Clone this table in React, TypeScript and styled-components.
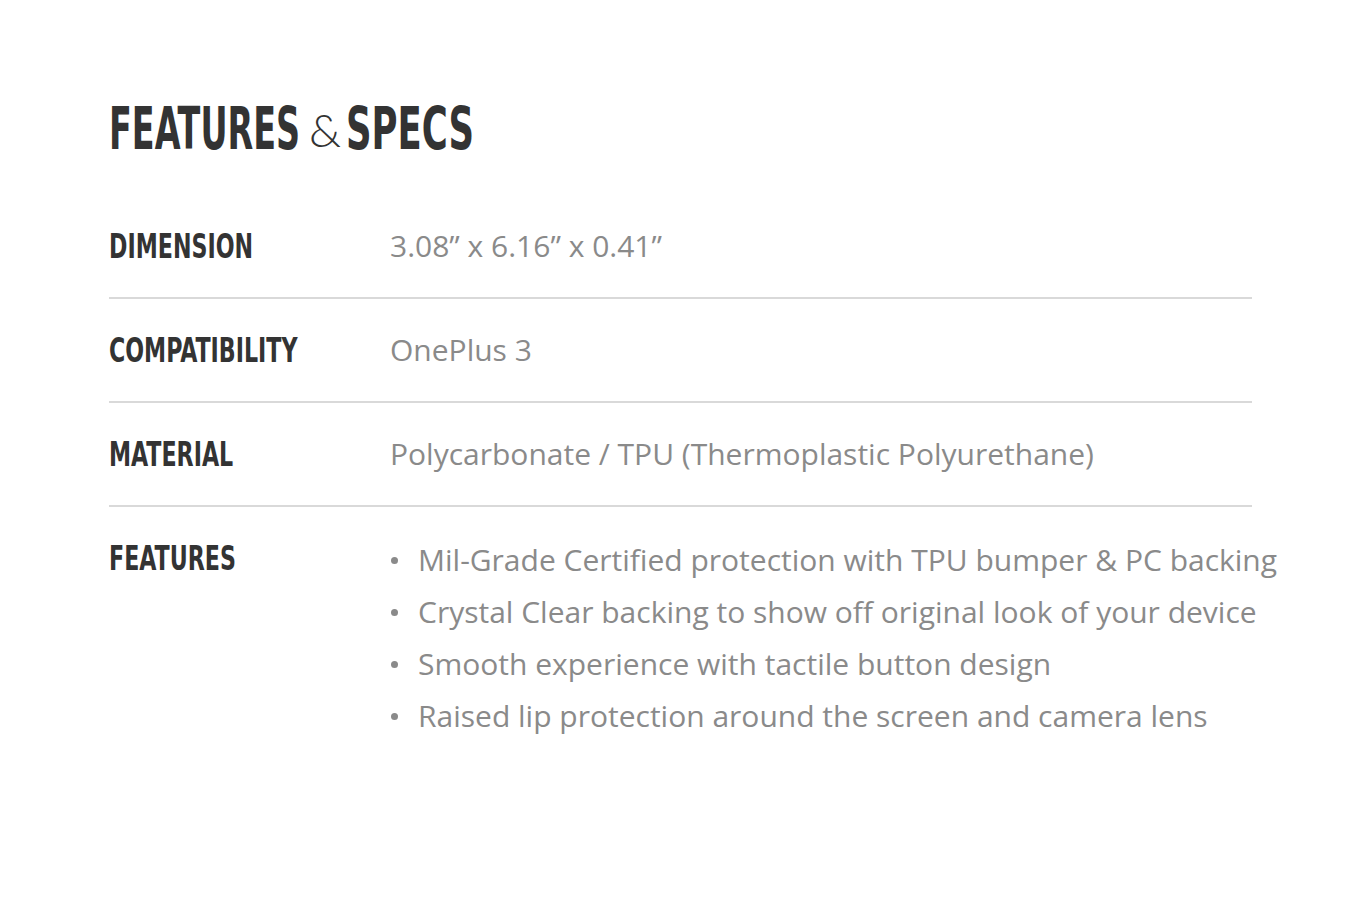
import React from "react";
import styled, { createGlobalStyle } from "styled-components";

const GlobalStyle = createGlobalStyle`
  html, body {
    margin: 0;
    padding: 0;
    background: #ffffff;
  }
  body {
    font-family: "Open Sans", "Liberation Sans", sans-serif;
  }
`

const Page = styled.main`
  width: 1360px;
  min-height: 900px;
  box-sizing: border-box;
  padding: 96px 108px 0 109px;
`

const Title = styled.h1`
  margin: 0 0 33px;
  height: 66px;
  display: flex;
  align-items: center;
  font-weight: normal;
`

// fixed-width slot so the squeezed word takes only its visible width
const Word = styled.span<{ $w: number }>`
  display: inline-block;
  width: ${(p) => p.$w}px;
`

const Condensed = styled.span<{ $size: number; $squeeze: number }>`
  display: inline-block;
  font-family: "DejaVu Sans Condensed", "DejaVu Sans", sans-serif;
  font-weight: bold;
  font-size: ${(p) => p.$size}px;
  line-height: 1;
  color: #333333;
  text-transform: uppercase;
  white-space: nowrap;
  transform: scaleX(${(p) => p.$squeeze});
  transform-origin: left center;
`

const Amp = styled.span`
  font-family: "Lato", "Open Sans", sans-serif;
  font-weight: 300;
  font-size: 46px;
  color: #333333;
  margin: 0 5px 0 10px;
`

const SpecList = styled.dl`
  margin: 0;
  width: 1143px;
`

const Row = styled.div<{ $last?: boolean }>`
  display: grid;
  grid-template-columns: 281px 1fr;
  align-items: start;
  padding: 31px 0;
  border-bottom: ${(p) => (p.$last ? "none" : "2px solid #d9d9d9")};
`

const Label = styled.dt`
  margin: 0;
  height: 40px;
  display: flex;
  align-items: center;
`

const Value = styled.dd`
  margin: 0;
  font-size: 30px;
  line-height: 40px;
  color: #8a8a8a;
  white-space: nowrap;
`

const Bullets = styled.ul`
  margin: -4px 0 0;
  padding: 0;
  list-style: none;
`

const Bullet = styled.li`
  position: relative;
  padding-left: 28px;
  line-height: 52px;

  &::before {
    content: "";
    position: absolute;
    left: 1px;
    top: 23px;
    width: 7px;
    height: 7px;
    border-radius: 50%;
    background: #8a8a8a;
  }
`

const specs = [
  { label: "Dimension", value: "3.08\u201d x 6.16\u201d x 0.41\u201d" },
  { label: "Compatibility", value: "OnePlus 3" },
  { label: "Material", value: "Polycarbonate / TPU (Thermoplastic Polyurethane)" },
]

const features = [
  "Mil-Grade Certified protection with TPU bumper & PC backing",
  "Crystal Clear backing to show off original look of your device",
  "Smooth experience with tactile button design",
  "Raised lip protection around the screen and camera lens",
]

const LABEL_SIZE = 34
const LABEL_SQUEEZE = 0.725

const App = () => {
  return (
    <Page>
      <GlobalStyle />
      <Title>
        <Word $w={190}>
          <Condensed $size={58} $squeeze={0.64}>Features</Condensed>
        </Word>
        <Amp>&amp;</Amp>
        <Word $w={126}>
          <Condensed $size={58} $squeeze={0.68}>Specs</Condensed>
        </Word>
      </Title>
      <SpecList>
        {specs.map((s) => (
          <Row key={s.label}>
            <Label>
              <Condensed $size={LABEL_SIZE} $squeeze={LABEL_SQUEEZE}>{s.label}</Condensed>
            </Label>
            <Value>{s.value}</Value>
          </Row>
        ))}
        <Row $last>
          <Label>
            <Condensed $size={LABEL_SIZE} $squeeze={LABEL_SQUEEZE}>Features</Condensed>
          </Label>
          <Value>
            <Bullets>
              {features.map((f) => (
                <Bullet key={f}>{f}</Bullet>
              ))}
            </Bullets>
          </Value>
        </Row>
      </SpecList>
    </Page>
  )
}

export default App
